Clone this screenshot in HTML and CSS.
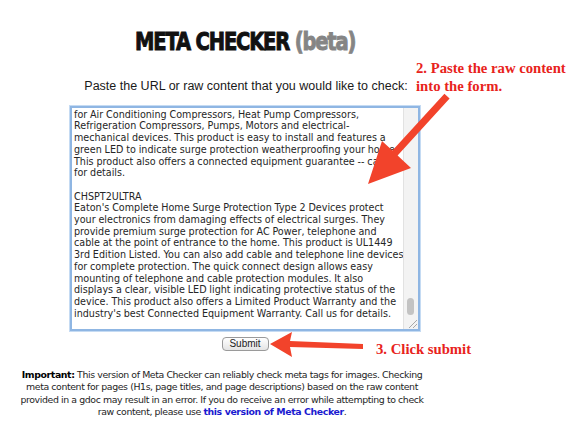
FILE: index.html
```html
<!DOCTYPE html>
<html>
<head>
<meta charset="utf-8">
<link rel="stylesheet" href="styles.css">
</head>
<body>
<div class="page">
  <div class="main">
    <h1 class="title"><span class="title-main">META CHECKER</span> <span class="title-beta">(beta)</span></h1>
    <p class="lead">Paste the URL or raw content that you would like to check:</p>
    <div class="textbox">
      <div class="textbox-text"><div class="cut">designed to protect <span class="spell">HVAC</span> systems, with applications</div>for Air Conditioning Compressors, Heat Pump Compressors,
Refrigeration Compressors, Pumps, Motors and electrical-
mechanical devices. This product is easy to install and features a
green LED to indicate surge protection weatherproofing your home.
This product also offers a connected equipment guarantee -- call us
for details.

CHSPT2ULTRA
Eaton's Complete Home Surge Protection Type 2 Devices protect
your electronics from damaging effects of electrical surges. They
provide premium surge protection for AC Power, telephone and
cable at the point of entrance to the home. This product is UL1449
3rd Edition Listed. You can also add cable and telephone line devices
for complete protection. The quick connect design allows easy
mounting of telephone and cable protection modules. It also
displays a clear, visible LED light indicating protective status of the
device. This product also offers a Limited Product Warranty and the
industry's best Connected Equipment Warranty. Call us for details.</div>
      <div class="scrollbar"><div class="thumb"></div></div>
      <div class="grip"></div>
    </div>
    <div class="actions"><button class="submit" type="button">Submit</button></div>
  </div>
  <p class="note"><b>Important:</b> This version of Meta Checker can reliably check meta tags for images. Checking meta content for pages (H1s, page titles, and page descriptions) based on the raw content provided in a gdoc may result in an error. If you do receive an error while attempting to check raw content, please use <a class="link" href="#">this version of Meta Checker</a>.</p>

  <div class="callout callout-paste">2. Paste the raw content<br>into the form.</div>
  <div class="callout callout-submit">3. Click submit</div>
  <svg class="arrows" width="577" height="441" viewBox="0 0 577 441">
    <polygon class="arrow" points="444.4,93.7 449.6,98.4 397.6,155.4 411,168 368,184 382,141 392.4,150.6"/>
    <polygon class="arrow" points="270,344 292,332 290,341 363,344 363,349 290,347 292,357"/>
  </svg>
</div>
</body>
</html>
```

FILE: styles.css
```css
html, body {
  margin: 0;
  padding: 0;
  background: #ffffff;
}

.page {
  position: relative;
  width: 577px;
  height: 441px;
  overflow: hidden;
}

.main {
  width: 490px;
  padding-top: 28px;
  display: flex;
  flex-direction: column;
  align-items: center;
}

.title {
  margin: 0;
  height: 28px;
  font-family: "DejaVu Sans", sans-serif;
  font-weight: bold;
  font-size: 25px;
  line-height: 28px;
  letter-spacing: -1.5px;
  transform: scaleX(0.78);
  -webkit-text-stroke: 1px currentColor;
  white-space: nowrap;
}

.title-main { color: #111111; }
.title-beta { color: #858585; }

.lead {
  margin: 23px 0 0 0;
  padding-left: 2px;
  font-family: "Liberation Sans", Arial, sans-serif;
  font-size: 12.5px;
  line-height: 15px;
  color: #1a1a1a;
}

.textbox {
  position: relative;
  margin-top: 12px;
  width: 346px;
  height: 221px;
  border: 2px solid #8fb6e3;
  box-shadow: 0 0 0 1px #c5dbf3;
  background: #ffffff;
  display: flex;
  overflow: hidden;
}

.textbox-text {
  flex: 1;
  padding: 0 0 0 2px;
  font-family: "DejaVu Sans", sans-serif;
  font-size: 9.6px;
  word-spacing: -0.2px;
  line-height: 11.7px;
  color: #262626;
  white-space: pre;
  overflow: hidden;
}

.cut {
  margin-top: -11px;
  height: 11.7px;
}

.spell {
  text-decoration: underline dotted #e23b3b;
}

.scrollbar {
  width: 14px;
  flex: none;
  background: #f3f3f3;
  border-left: 1px solid #e2e2e2;
  position: relative;
}

.thumb {
  position: absolute;
  left: 3px;
  bottom: 14px;
  width: 7px;
  height: 17px;
  border-radius: 4px;
  background: #c3c3c3;
}

.grip {
  position: absolute;
  right: 1px;
  bottom: 1px;
  width: 8px;
  height: 8px;
  background: linear-gradient(135deg, transparent 45%, #a8a8a8 46%, #a8a8a8 52%, transparent 53%, transparent 70%, #a8a8a8 71%, #a8a8a8 77%, transparent 78%);
}

.actions {
  margin-top: 6px;
  display: flex;
  justify-content: center;
}

.submit {
  width: 47px;
  height: 14px;
  padding: 0;
  font-family: "Liberation Sans", Arial, sans-serif;
  font-size: 10px;
  line-height: 12px;
  color: #222222;
  border: 1px solid #9a9a9a;
  border-radius: 4px;
  background: linear-gradient(#ffffff, #e4e4e4);
}

.note {
  width: 444px;
  margin: 18px 0 0 0;
  text-align: center;
  font-family: "DejaVu Sans", sans-serif;
  font-size: 9.4px;
  line-height: 12.4px;
  color: #1e1e1e;
  letter-spacing: -0.4px;
  padding: 0 20px;
  box-sizing: border-box;
}

.note b { color: #000000; }

.link {
  color: #1a1ad0;
  font-weight: bold;
  text-decoration: none;
}

.callout {
  position: absolute;
  font-family: "Liberation Serif", "Times New Roman", serif;
  font-weight: bold;
  font-size: 14.7px;
  line-height: 18px;
  color: #e8231c;
  white-space: nowrap;
}

.callout-paste {
  left: 416px;
  top: 59px;
}

.callout-submit {
  left: 376px;
  top: 340px;
}

.arrows {
  position: absolute;
  left: 0;
  top: 0;
  pointer-events: none;
}

.arrow {
  fill: #f2432b;
}
```
